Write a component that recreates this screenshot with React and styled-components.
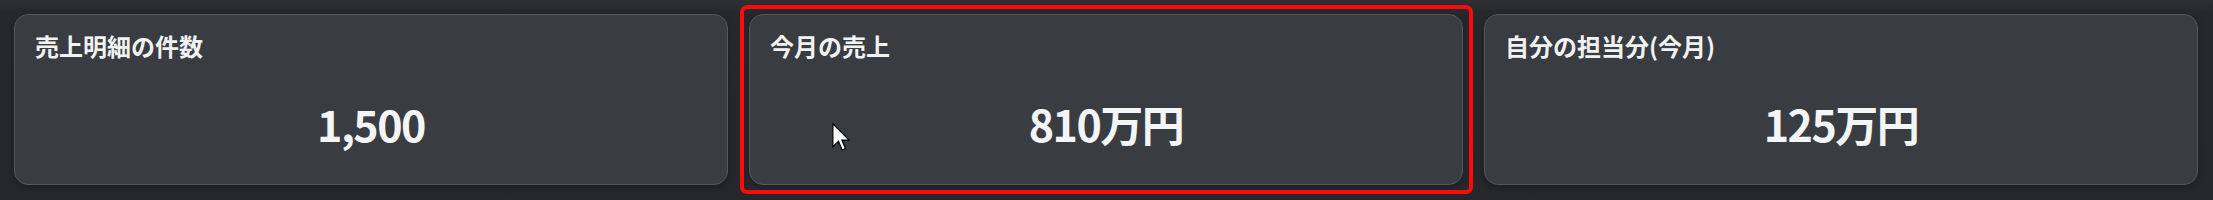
import React from "react";
import styled, { createGlobalStyle } from "styled-components";

const GlobalStyle = createGlobalStyle`
  html, body {
    margin: 0;
    padding: 0;
    background: #26282c;
  }
  body {
    font-family: "Noto Sans CJK JP", "Noto Sans", sans-serif;
    color: #f3f4f6;
  }
`;

const Page = styled.div`
  box-sizing: border-box;
  height: 200px;
  padding: 14px 15px 15px 14px;
  background: linear-gradient(to bottom, #2e3034 0px, #2a2c30 6px, #26282c 12px, #25272b 100%);
`;

const Grid = styled.div`
  display: grid;
  grid-template-columns: repeat(3, 1fr);
  gap: 21px;
  height: 100%;
`;

const Card = styled.div`
  position: relative;
  box-sizing: border-box;
  display: flex;
  flex-direction: column;
  background: #393c41;
  border: 1px solid #54575c;
  border-radius: 14px;
  padding: 17px 20px 0;
  box-shadow: 0 2px 6px rgba(0, 0, 0, 0.25);
`;

const Title = styled.div`
  font-size: 24px;
  font-weight: 700;
  line-height: 1.2;
  color: #f1f2f4;
  letter-spacing: 0;
`;

const Value = styled.div`
  flex: 1;
  display: flex;
  align-items: center;
  justify-content: center;
  padding-top: 2px;
  font-size: 43px;
  font-weight: 700;
  line-height: 1.2;
  letter-spacing: -1.5px;
  color: #f4f5f7;
`;

const Highlight = styled.div`
  position: absolute;
  top: -10px;
  left: -10px;
  right: -11px;
  bottom: -10px;
  border: 4px solid #ff0a0a;
  border-radius: 7px;
  pointer-events: none;
`;

const Cursor = styled.svg`
  position: absolute;
  left: ${(p) => p.$x}px;
  top: ${(p) => p.$y}px;
  width: 18px;
  height: 28px;
  pointer-events: none;
`;

const stats = [
  { title: "売上明細の件数", value: "1,500" },
  { title: "今月の売上", value: "810万円", active: true },
  { title: "自分の担当分(今月)", value: "125万円" },
];

export default function App() {
  return (
    <>
      <GlobalStyle />
      <Page>
        <Grid>
          {stats.map((s) => (
            <Card key={s.title}>
              <Title>{s.title}</Title>
              <Value>{s.value}</Value>
              {s.active && (
                <>
                  <Highlight />
                  <Cursor $x={82} $y={108} viewBox="0 0 12 19">
                    <path
                      d="M0.5 0.5 L0.5 16 L4.3 12.4 L6.8 18.3 L9 17.3 L6.6 11.6 L11.5 11.6 Z"
                      fill="#ffffff"
                      stroke="#000000"
                      strokeWidth="0.8"
                      strokeLinejoin="miter"
                    />
                  </Cursor>
                </>
              )}
            </Card>
          ))}
        </Grid>
      </Page>
    </>
  );
}
